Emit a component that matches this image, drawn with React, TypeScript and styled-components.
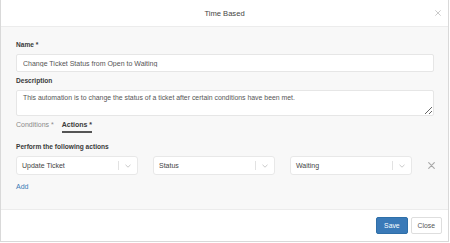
import React from "react";
import styled, { createGlobalStyle } from "styled-components";

const GlobalStyle = createGlobalStyle`
  html, body { margin: 0; padding: 0; background: #ffffff; }
  body { font-family: "Liberation Sans", Arial, sans-serif; color: #333; }
  * { box-sizing: border-box; }
`;

const Modal = styled.div`
  width: 449px;
  height: 242px;
  display: flex;
  flex-direction: column;
  border: 1px solid #d9d9d9;
  border-top: none;
  background: #fff;
`;

const Header = styled.div`
  height: 27px;
  flex: none;
  display: grid;
  grid-template-columns: 40px 1fr 40px;
  align-items: center;
  border-bottom: 1px solid #ececec;
`;

const Title = styled.div`
  grid-column: 2;
  text-align: center;
  font-size: 7.6px;
  color: #444;
  padding-top: 1px;
`;

const HeaderClose = styled.button`
  justify-self: end;
  margin-right: 5px;
  border: none;
  background: none;
  padding: 0;
  width: 10px;
  height: 10px;
  display: flex;
  align-items: center;
  justify-content: center;
  color: #b5b5b5;
`;

const Body = styled.div`
  flex: 1;
  background: #f8f8f8;
  padding: 13px 14px 0 15px;
`;

const Label = styled.div`
  font-size: 6.6px;
  font-weight: bold;
  line-height: 9px;
  color: #3a3a3a;
  margin-bottom: 5px;
`;

const Group = styled.div`
  margin-bottom: 4px;
`;

const TextInput = styled.input`
  display: block;
  width: 100%;
  height: 18px;
  border: 1px solid #e6e6e6;
  border-radius: 2px;
  background: #fff;
  padding: 0 6px;
  font-family: "Liberation Sans", Arial, sans-serif;
  font-size: 7px;
  color: #555;
  outline: none;
`;

const TextArea = styled.textarea`
  display: block;
  width: 100%;
  height: 26px;
  border: 1px solid #e6e6e6;
  border-radius: 2px;
  background: #fff;
  padding: 3px 6px;
  font-family: "Liberation Sans", Arial, sans-serif;
  font-size: 6.9px;
  color: #555;
  outline: none;
  resize: vertical;
  overflow: hidden;
`;

const Tabs = styled.div`
  display: flex;
  gap: 8px;
  margin-bottom: 9px;
`;

const Tab = styled.div<{ $active?: boolean }>`
  font-size: 7px;
  line-height: 10px;
  padding-bottom: 1px;
  font-weight: ${(p) => (p.$active ? "bold" : "normal")};
  color: ${(p) => (p.$active ? "#3a3a3a" : "#8a8a8a")};
  border-bottom: 2px solid ${(p) => (p.$active ? "#555" : "transparent")};
`;

const ActionRow = styled.div`
  display: grid;
  grid-template-columns: 122px 122px 122px 1fr;
  column-gap: 15px;
  align-items: center;
`;

const Select = styled.div`
  height: 19px;
  display: flex;
  align-items: center;
  background: #fff;
  border: 1px solid #e8e8e8;
  border-radius: 3px;
`;

const SelectValue = styled.div`
  flex: 1;
  padding-left: 5px;
  font-size: 7px;
  color: #444;
`;

const Separator = styled.span`
  width: 1px;
  height: 9px;
  background: #e2e2e2;
`;

const Chevron = styled.div`
  width: 18px;
  display: flex;
  justify-content: center;
  color: #bbb;
`;

const Remove = styled.button`
  justify-self: start;
  margin-left: 1px;
  border: none;
  background: none;
  padding: 0;
  color: #a8a8a8;
  display: flex;
`;

const AddLink = styled.a`
  display: inline-block;
  margin-top: 5px;
  font-size: 7px;
  line-height: 10px;
  color: #3a78b5;
`;

const Footer = styled.div`
  height: 32px;
  flex: none;
  border-top: 1px solid #ececec;
  display: flex;
  justify-content: flex-end;
  align-items: center;
  gap: 3px;
  padding-right: 6px;
  padding-bottom: 1px;
`;

const Button = styled.button<{ $primary?: boolean }>`
  height: 17px;
  padding: 0 ${(p) => (p.$primary ? 7 : 6)}px;
  font-family: "Liberation Sans", Arial, sans-serif;
  font-size: 6.8px;
  border-radius: 2px;
  border: 1px solid ${(p) => (p.$primary ? "#2f6fa8" : "#dedede")};
  background: ${(p) => (p.$primary ? "#3a7ab8" : "#fff")};
  color: ${(p) => (p.$primary ? "#fff" : "#555")};
`;

const XIcon = ({ size, stroke }: { size: number; stroke: number }) => (
  <svg width={size} height={size} viewBox="0 0 10 10">
    <path d="M1 1 L9 9 M9 1 L1 9" stroke="currentColor" strokeWidth={stroke} strokeLinecap="round" />
  </svg>
);

const ChevronIcon = () => (
  <svg width="6" height="4" viewBox="0 0 6 4">
    <path d="M0.5 0.8 L3 3.2 L5.5 0.8" fill="none" stroke="currentColor" strokeWidth="0.8" />
  </svg>
);

const SelectBox = ({ value }: { value: string }) => (
  <Select>
    <SelectValue>{value}</SelectValue>
    <Separator />
    <Chevron>
      <ChevronIcon />
    </Chevron>
  </Select>
);

export default function App() {
  return (
    <>
      <GlobalStyle />
      <Modal>
        <Header>
          <Title>Time Based</Title>
          <HeaderClose>
            <XIcon size={6} stroke={1.2} />
          </HeaderClose>
        </Header>
        <Body>
          <Group>
            <Label>Name *</Label>
            <TextInput defaultValue="Change Ticket Status from Open to Waiting" />
          </Group>
          <Group>
            <Label>Description</Label>
            <TextArea defaultValue="This automation is to change the status of a ticket after certain conditions have been met." />
          </Group>
          <Tabs>
            <Tab>Conditions *</Tab>
            <Tab $active>Actions *</Tab>
          </Tabs>
          <Label>Perform the following actions</Label>
          <ActionRow>
            <SelectBox value="Update Ticket" />
            <SelectBox value="Status" />
            <SelectBox value="Waiting" />
            <Remove>
              <XIcon size={7} stroke={1.6} />
            </Remove>
          </ActionRow>
          <AddLink>Add</AddLink>
        </Body>
        <Footer>
          <Button $primary>Save</Button>
          <Button>Close</Button>
        </Footer>
      </Modal>
    </>
  );
}
